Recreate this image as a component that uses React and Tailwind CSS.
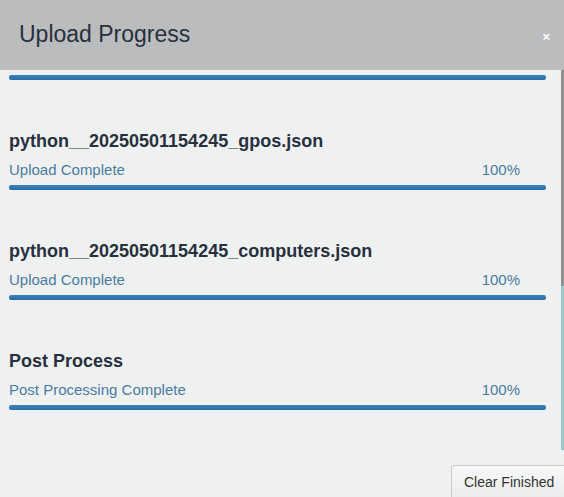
import React from "react";

const items = [
  { name: "python__20250501154245_gpos.json", label: "Upload Complete" },
  { name: "python__20250501154245_computers.json", label: "Upload Complete" },
  { name: "Post Process", label: "Post Processing Complete" },
];

function Bar() {
  return (
    <div className="h-[5px] w-[537px] rounded-[2px] bg-gradient-to-b from-[#3a83c0] to-[#2d6da3]" />
  );
}

export default function App() {
  return (
    <div
      className="w-[564px] h-[497px] overflow-hidden bg-[#eff1f0] flex flex-col"
      style={{ fontFamily: '"Liberation Sans", Arial, sans-serif' }}
    >
      <div className="h-[70px] shrink-0 bg-[#bbbcbe] flex items-center justify-between pl-[19px] pr-[14px]">
        <div className="text-[23px] leading-none text-[#27303d] -mt-[2px]">Upload Progress</div>
        <div className="text-[13px] font-bold text-white leading-none mt-[3px]">×</div>
      </div>
      <div className="flex flex-1 min-h-0">
        <div className="flex-1 pl-[9px] flex flex-col">
          <div className="mt-[5px]">
            <Bar />
          </div>
          {items.map((it) => (
            <div key={it.name} className="flex flex-col">
              <div className="mt-[51px] h-[20px] leading-[20px] text-[18px] font-bold text-[#27303d]">
                {it.name}
              </div>
              <div className="mt-[9px] h-[20px] leading-[20px] text-[15px] text-[#4a7ba3] flex justify-between w-[511px]">
                <span>{it.label}</span>
                <span>100%</span>
              </div>
              <div className="mt-[5px]">
                <Bar />
              </div>
            </div>
          ))}
          <div className="flex justify-end mt-[55px] -mr-[6px]">
            <button className="h-[34px] w-[116px] pl-[12px] text-left border border-[#c9cbcb] rounded-[3px] bg-gradient-to-b from-[#f8f8f8] to-[#ececec] text-[14px] text-[#333] leading-none whitespace-nowrap">
              Clear Finished
            </button>
          </div>
        </div>
        <div className="w-[3px] flex flex-col h-[380px]">
          <div className="h-[216px] bg-[#909191]" />
          <div className="flex-1 bg-[#9cc5c5]" />
        </div>
      </div>
    </div>
  );
}
